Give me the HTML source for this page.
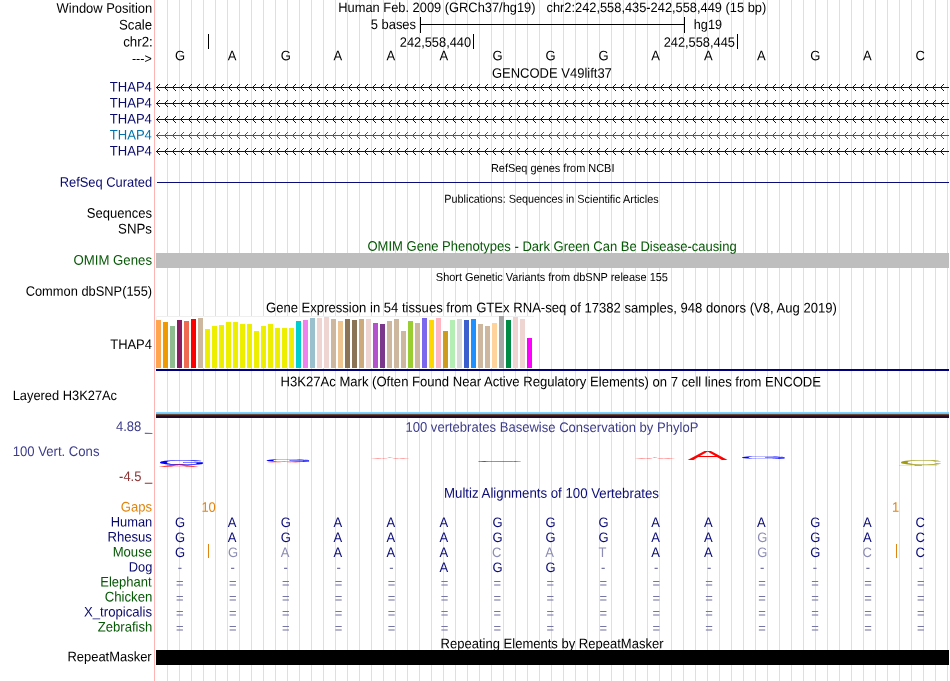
<!DOCTYPE html>
<html><head><meta charset="utf-8"><title>UCSC Genome Browser chr2:242,558,435-242,558,449</title>
<style>
html,body{margin:0;padding:0;background:#fff;}
svg{display:block;will-change:transform;font-family:"Liberation Sans",sans-serif;}
</style></head><body>
<svg width="950" height="681" viewBox="0 0 950 681">
<rect width="950" height="681" fill="#fff"/>
<g shape-rendering="crispEdges">
<rect x="167" y="0" width="1" height="681" fill="#dbdbff"/>
<rect x="179" y="0" width="1" height="681" fill="#dbdbff"/>
<rect x="191" y="0" width="1" height="681" fill="#dbdbff"/>
<rect x="203" y="0" width="1" height="681" fill="#dbdbff"/>
<rect x="215" y="0" width="1" height="681" fill="#dbdbff"/>
<rect x="227" y="0" width="1" height="681" fill="#dbdbff"/>
<rect x="239" y="0" width="1" height="681" fill="#dbdbff"/>
<rect x="251" y="0" width="1" height="681" fill="#dbdbff"/>
<rect x="263" y="0" width="1" height="681" fill="#dbdbff"/>
<rect x="275" y="0" width="1" height="681" fill="#dbdbff"/>
<rect x="287" y="0" width="1" height="681" fill="#dbdbff"/>
<rect x="299" y="0" width="1" height="681" fill="#dbdbff"/>
<rect x="311" y="0" width="1" height="681" fill="#dbdbff"/>
<rect x="323" y="0" width="1" height="681" fill="#dbdbff"/>
<rect x="335" y="0" width="1" height="681" fill="#dbdbff"/>
<rect x="347" y="0" width="1" height="681" fill="#dbdbff"/>
<rect x="359" y="0" width="1" height="681" fill="#dbdbff"/>
<rect x="371" y="0" width="1" height="681" fill="#dbdbff"/>
<rect x="383" y="0" width="1" height="681" fill="#dbdbff"/>
<rect x="395" y="0" width="1" height="681" fill="#dbdbff"/>
<rect x="407" y="0" width="1" height="681" fill="#dbdbff"/>
<rect x="419" y="0" width="1" height="681" fill="#dbdbff"/>
<rect x="431" y="0" width="1" height="681" fill="#dbdbff"/>
<rect x="443" y="0" width="1" height="681" fill="#dbdbff"/>
<rect x="455" y="0" width="1" height="681" fill="#dbdbff"/>
<rect x="467" y="0" width="1" height="681" fill="#dbdbff"/>
<rect x="479" y="0" width="1" height="681" fill="#dbdbff"/>
<rect x="491" y="0" width="1" height="681" fill="#dbdbff"/>
<rect x="503" y="0" width="1" height="681" fill="#dbdbff"/>
<rect x="515" y="0" width="1" height="681" fill="#dbdbff"/>
<rect x="527" y="0" width="1" height="681" fill="#dbdbff"/>
<rect x="539" y="0" width="1" height="681" fill="#dbdbff"/>
<rect x="551" y="0" width="1" height="681" fill="#dbdbff"/>
<rect x="563" y="0" width="1" height="681" fill="#dbdbff"/>
<rect x="575" y="0" width="1" height="681" fill="#dbdbff"/>
<rect x="587" y="0" width="1" height="681" fill="#dbdbff"/>
<rect x="599" y="0" width="1" height="681" fill="#dbdbff"/>
<rect x="611" y="0" width="1" height="681" fill="#dbdbff"/>
<rect x="623" y="0" width="1" height="681" fill="#dbdbff"/>
<rect x="635" y="0" width="1" height="681" fill="#dbdbff"/>
<rect x="647" y="0" width="1" height="681" fill="#dbdbff"/>
<rect x="659" y="0" width="1" height="681" fill="#dbdbff"/>
<rect x="671" y="0" width="1" height="681" fill="#dbdbff"/>
<rect x="683" y="0" width="1" height="681" fill="#dbdbff"/>
<rect x="695" y="0" width="1" height="681" fill="#dbdbff"/>
<rect x="707" y="0" width="1" height="681" fill="#dbdbff"/>
<rect x="719" y="0" width="1" height="681" fill="#dbdbff"/>
<rect x="731" y="0" width="1" height="681" fill="#dbdbff"/>
<rect x="743" y="0" width="1" height="681" fill="#dbdbff"/>
<rect x="755" y="0" width="1" height="681" fill="#dbdbff"/>
<rect x="767" y="0" width="1" height="681" fill="#dbdbff"/>
<rect x="779" y="0" width="1" height="681" fill="#dbdbff"/>
<rect x="791" y="0" width="1" height="681" fill="#dbdbff"/>
<rect x="803" y="0" width="1" height="681" fill="#dbdbff"/>
<rect x="815" y="0" width="1" height="681" fill="#dbdbff"/>
<rect x="827" y="0" width="1" height="681" fill="#dbdbff"/>
<rect x="839" y="0" width="1" height="681" fill="#dbdbff"/>
<rect x="851" y="0" width="1" height="681" fill="#dbdbff"/>
<rect x="863" y="0" width="1" height="681" fill="#dbdbff"/>
<rect x="875" y="0" width="1" height="681" fill="#dbdbff"/>
<rect x="887" y="0" width="1" height="681" fill="#dbdbff"/>
<rect x="899" y="0" width="1" height="681" fill="#dbdbff"/>
<rect x="911" y="0" width="1" height="681" fill="#dbdbff"/>
<rect x="923" y="0" width="1" height="681" fill="#dbdbff"/>
<rect x="935" y="0" width="1" height="681" fill="#dbdbff"/>
<rect x="947" y="0" width="1" height="681" fill="#dbdbff"/>
<rect x="154" y="0" width="1" height="681" fill="#ffb4b4"/>
<rect x="208" y="34" width="1" height="15" fill="#000"/>
<rect x="473" y="34" width="1" height="15" fill="#000"/>
<rect x="737" y="34" width="1" height="15" fill="#000"/>
<rect x="420" y="24" width="265" height="1" fill="#000"/>
<rect x="420" y="17" width="1" height="16" fill="#000"/>
<rect x="684" y="17" width="1" height="16" fill="#000"/>
<rect x="156" y="87" width="793" height="1" fill="#0c0c78"/>
<rect x="156" y="103" width="793" height="1" fill="#0c0c78"/>
<rect x="156" y="119" width="793" height="1" fill="#0c0c78"/>
<rect x="156" y="135" width="793" height="1" fill="#0171ab"/>
<rect x="156" y="151" width="793" height="1" fill="#0c0c78"/>
<rect x="157" y="182" width="792" height="1" fill="#0c0c78"/>
<rect x="156" y="253" width="793" height="15" fill="#bebebe"/>
<rect x="156" y="316" width="378" height="52" fill="#fff"/>
<rect x="156" y="316" width="378" height="1" fill="#efefef"/>
<rect x="156" y="316" width="1" height="52" fill="#f4f4f4"/>
<rect x="156" y="320" width="5" height="48" fill="#FFA54F"/>
<rect x="163" y="322" width="5" height="46" fill="#EE9A00"/>
<rect x="170" y="326" width="5" height="42" fill="#8FBC8F"/>
<rect x="177" y="320" width="5" height="48" fill="#8B1C62"/>
<rect x="184" y="321" width="5" height="47" fill="#EE6A50"/>
<rect x="191" y="319" width="5" height="49" fill="#FF0000"/>
<rect x="198" y="318" width="5" height="50" fill="#CDB79E"/>
<rect x="205" y="329" width="5" height="39" fill="#EEEE00"/>
<rect x="212" y="326" width="5" height="42" fill="#EEEE00"/>
<rect x="219" y="325" width="5" height="43" fill="#EEEE00"/>
<rect x="226" y="322" width="5" height="46" fill="#EEEE00"/>
<rect x="233" y="322" width="5" height="46" fill="#EEEE00"/>
<rect x="240" y="324" width="5" height="44" fill="#EEEE00"/>
<rect x="247" y="324" width="5" height="44" fill="#EEEE00"/>
<rect x="254" y="331" width="5" height="37" fill="#EEEE00"/>
<rect x="261" y="326" width="5" height="42" fill="#EEEE00"/>
<rect x="268" y="324" width="5" height="44" fill="#EEEE00"/>
<rect x="275" y="328" width="5" height="40" fill="#EEEE00"/>
<rect x="282" y="328" width="5" height="40" fill="#EEEE00"/>
<rect x="289" y="328" width="5" height="40" fill="#EEEE00"/>
<rect x="296" y="321" width="5" height="47" fill="#00CDCD"/>
<rect x="303" y="320" width="5" height="48" fill="#EE82EE"/>
<rect x="310" y="318" width="5" height="50" fill="#9AC0CD"/>
<rect x="317" y="318" width="5" height="50" fill="#EED5D2"/>
<rect x="324" y="317" width="5" height="51" fill="#EED5D2"/>
<rect x="331" y="319" width="5" height="49" fill="#CDB79E"/>
<rect x="338" y="321" width="5" height="47" fill="#EEC591"/>
<rect x="345" y="319" width="5" height="49" fill="#8B7355"/>
<rect x="352" y="320" width="5" height="48" fill="#8B7355"/>
<rect x="359" y="319" width="5" height="49" fill="#CDAA7D"/>
<rect x="366" y="319" width="5" height="49" fill="#EED5D2"/>
<rect x="373" y="323" width="5" height="45" fill="#B452CD"/>
<rect x="380" y="324" width="5" height="44" fill="#7A378B"/>
<rect x="387" y="321" width="5" height="47" fill="#CDB79E"/>
<rect x="394" y="319" width="5" height="49" fill="#CDB79E"/>
<rect x="401" y="331" width="5" height="37" fill="#CDB79E"/>
<rect x="408" y="321" width="5" height="47" fill="#9ACD32"/>
<rect x="415" y="323" width="5" height="45" fill="#CDB79E"/>
<rect x="422" y="318" width="5" height="50" fill="#7A67EE"/>
<rect x="429" y="320" width="5" height="48" fill="#FFD700"/>
<rect x="436" y="318" width="5" height="50" fill="#FFB6C1"/>
<rect x="443" y="331" width="5" height="37" fill="#CD9B1D"/>
<rect x="450" y="320" width="5" height="48" fill="#B4EEB4"/>
<rect x="457" y="319" width="5" height="49" fill="#D9D9D9"/>
<rect x="464" y="320" width="5" height="48" fill="#3A5FCD"/>
<rect x="471" y="319" width="5" height="49" fill="#1E90FF"/>
<rect x="478" y="324" width="5" height="44" fill="#CDB79E"/>
<rect x="485" y="326" width="5" height="42" fill="#CDB79E"/>
<rect x="492" y="323" width="5" height="45" fill="#FFD39B"/>
<rect x="499" y="316" width="5" height="52" fill="#A6A6A6"/>
<rect x="506" y="320" width="5" height="48" fill="#008B45"/>
<rect x="513" y="317" width="5" height="51" fill="#EED5D2"/>
<rect x="520" y="319" width="5" height="49" fill="#EED5D2"/>
<rect x="527" y="338" width="5" height="30" fill="#FF00FF"/>
<rect x="156" y="369" width="793" height="2" fill="#00007a"/>
<rect x="156" y="412" width="793" height="1" fill="#80d4ff"/>
<rect x="156" y="413" width="793" height="1" fill="#7ac4ea"/>
<rect x="156" y="414" width="793" height="1" fill="#6b4a3c"/>
<rect x="156" y="415" width="793" height="1" fill="#3c1c2c"/>
<rect x="156" y="416" width="793" height="1" fill="#220a22"/>
<rect x="156" y="417" width="793" height="1" fill="#1c0a2a"/>
<rect x="208" y="544" width="1" height="14" fill="#e0850f"/>
<rect x="896" y="544" width="1" height="14" fill="#e0850f"/>
<rect x="156" y="650" width="793" height="15" fill="#000"/>
</g>
<pattern id="cvn" patternUnits="userSpaceOnUse" x="156" y="84" width="8" height="16"><rect x="1" y="2" width="1" height="1" fill="#0c0c78"/><rect x="1" y="4" width="1" height="1" fill="#0c0c78"/><rect x="2" y="1" width="1" height="1" fill="#0c0c78"/><rect x="2" y="5" width="1" height="1" fill="#0c0c78"/><rect x="3" y="0" width="1" height="1" fill="#0c0c78"/><rect x="3" y="6" width="1" height="1" fill="#0c0c78"/></pattern>
<pattern id="cvt" patternUnits="userSpaceOnUse" x="156" y="84" width="8" height="16"><rect x="1" y="2" width="1" height="1" fill="#0171ab"/><rect x="1" y="4" width="1" height="1" fill="#0171ab"/><rect x="2" y="1" width="1" height="1" fill="#0171ab"/><rect x="2" y="5" width="1" height="1" fill="#0171ab"/><rect x="3" y="0" width="1" height="1" fill="#0171ab"/><rect x="3" y="6" width="1" height="1" fill="#0171ab"/></pattern>
<rect x="156" y="84" width="793" height="7" fill="url(#cvn)" shape-rendering="crispEdges"/>
<rect x="156" y="100" width="793" height="7" fill="url(#cvn)" shape-rendering="crispEdges"/>
<rect x="156" y="116" width="793" height="7" fill="url(#cvn)" shape-rendering="crispEdges"/>
<rect x="156" y="132" width="793" height="7" fill="url(#cvt)" shape-rendering="crispEdges"/>
<rect x="156" y="148" width="793" height="7" fill="url(#cvn)" shape-rendering="crispEdges"/>
<text transform="translate(56.60,12.8) scale(1,1.06) rotate(0.03)" font-size="12.95" fill="#000">Window Position</text>
<text transform="translate(118.97,29.6) scale(1,1.06) rotate(0.03)" font-size="13.24" fill="#000">Scale</text>
<text transform="translate(123.17,46.6) scale(1,1.06) rotate(0.03)" font-size="13.32" fill="#000">chr2:</text>
<text transform="translate(131.90,62.9) scale(1,1.06) rotate(0.03)" font-size="12.54" fill="#000">---&gt;</text>
<text transform="translate(109.84,91.5) scale(1,1.06) rotate(0.03)" font-size="13.06" fill="#0a0a6e">THAP4</text>
<text transform="translate(109.84,107.5) scale(1,1.06) rotate(0.03)" font-size="13.06" fill="#0a0a6e">THAP4</text>
<text transform="translate(109.84,123.5) scale(1,1.06) rotate(0.03)" font-size="13.06" fill="#0a0a6e">THAP4</text>
<text transform="translate(109.84,139.5) scale(1,1.06) rotate(0.03)" font-size="13.06" fill="#0171ab">THAP4</text>
<text transform="translate(109.84,155.5) scale(1,1.06) rotate(0.03)" font-size="13.06" fill="#0a0a6e">THAP4</text>
<text transform="translate(59.67,186.7) scale(1,1.06) rotate(0.03)" font-size="12.92" fill="#0a0a6e">RefSeq Curated</text>
<text transform="translate(86.78,217.8) scale(1,1.06) rotate(0.03)" font-size="13.03" fill="#000">Sequences</text>
<text transform="translate(118.07,233.6) scale(1,1.06) rotate(0.03)" font-size="13.27" fill="#000">SNPs</text>
<text transform="translate(73.47,264.7) scale(1,1.06) rotate(0.03)" font-size="13.21" fill="#065806">OMIM Genes</text>
<text transform="translate(25.66,295.8) scale(1,1.06) rotate(0.03)" font-size="12.87" fill="#000">Common dbSNP(155)</text>
<text transform="translate(110.24,349) scale(1,1.06) rotate(0.03)" font-size="12.94" fill="#000">THAP4</text>
<text transform="translate(12.67,400) scale(1,1.06) rotate(0.03)" font-size="12.86" fill="#000">Layered H3K27Ac</text>
<text transform="translate(115.94,430.9) scale(1,1.06) rotate(0.03)" font-size="13.05" fill="#3c3c8c">4.88 _</text>
<text transform="translate(12.68,456.0) scale(1,1.06) rotate(0.03)" font-size="13.14" fill="#3c3c8c">100 Vert. Cons</text>
<text transform="translate(119.08,481.1) scale(1,1.06) rotate(0.03)" font-size="12.96" fill="#8c3232">-4.5 _</text>
<text transform="translate(120.75,511.5) scale(1,1.06) rotate(0.03)" font-size="13.07" fill="#e0850f">Gaps</text>
<text transform="translate(110.67,526.5) scale(1,1.06) rotate(0.03)" font-size="12.92" fill="#0a0a6e">Human</text>
<text transform="translate(107.45,541.5) scale(1,1.06) rotate(0.03)" font-size="13.14" fill="#0a0a6e">Rhesus</text>
<text transform="translate(112.65,556.5) scale(1,1.06) rotate(0.03)" font-size="13.14" fill="#065806">Mouse</text>
<text transform="translate(128.77,571.5) scale(1,1.06) rotate(0.03)" font-size="12.84" fill="#0a0a6e">Dog</text>
<text transform="translate(100.26,586.5) scale(1,1.06) rotate(0.03)" font-size="13.00" fill="#065806">Elephant</text>
<text transform="translate(104.64,601.5) scale(1,1.06) rotate(0.03)" font-size="13.20" fill="#065806">Chicken</text>
<text transform="translate(84.04,616.5) scale(1,1.06) rotate(0.03)" font-size="13.15" fill="#0a0a6e">X_tropicalis</text>
<text transform="translate(97.71,631.5) scale(1,1.06) rotate(0.03)" font-size="13.11" fill="#065806">Zebrafish</text>
<text transform="translate(67.46,661.3) scale(1,1.06) rotate(0.03)" font-size="12.96" fill="#000">RepeatMasker</text>
<text transform="translate(338.27,12) scale(1,1.06) rotate(0.03)" font-size="12.87" fill="#000">Human Feb. 2009 (GRCh37/hg19)</text>
<text transform="translate(546.49,12) scale(1,1.06) rotate(0.03)" font-size="12.84" fill="#000">chr2:242,558,435-242,558,449 (15 bp)</text>
<text transform="translate(370.68,29) scale(1,1.06) rotate(0.03)" font-size="12.96" fill="#000">5 bases</text>
<text transform="translate(693.84,29) scale(1,1.06) rotate(0.03)" font-size="12.65" fill="#000">hg19</text>
<text transform="translate(399.76,46.8) scale(1,1.06) rotate(0.03)" font-size="12.84" fill="#000">242,558,440</text>
<text transform="translate(663.66,46.8) scale(1,1.06) rotate(0.03)" font-size="12.82" fill="#000">242,558,445</text>
<text transform="translate(491.95,77.7) scale(1,1.06) rotate(0.03)" font-size="13.01" fill="#000">GENCODE V49lift37</text>
<text transform="translate(490.92,172) scale(1,1.06) rotate(0.03)" font-size="10.96" fill="#000">RefSeq genes from NCBI</text>
<text transform="translate(444.33,202.8) scale(1,1.06) rotate(0.03)" font-size="10.84" fill="#000">Publications: Sequences in Scientific Articles</text>
<text transform="translate(367.48,250.8) scale(1,1.06) rotate(0.03)" font-size="13.04" fill="#065806">OMIM Gene Phenotypes - Dark Green Can Be Disease-causing</text>
<text transform="translate(435.86,281) scale(1,1.06) rotate(0.03)" font-size="10.96" fill="#000">Short Genetic Variants from dbSNP release 155</text>
<text transform="translate(265.95,312.2) scale(1,1.06) rotate(0.03)" font-size="13.10" fill="#000">Gene Expression in 54 tissues from GTEx RNA-seq of 17382 samples, 948 donors (V8, Aug 2019)</text>
<text transform="translate(280.55,386.2) scale(1,1.06) rotate(0.03)" font-size="13.09" fill="#000">H3K27Ac Mark (Often Found Near Active Regulatory Elements) on 7 cell lines from ENCODE</text>
<text transform="translate(405.49,431.8) scale(1,1.06) rotate(0.03)" font-size="13.05" fill="#3c3c8c">100 vertebrates Basewise Conservation by PhyloP</text>
<text transform="translate(444.04,497.8) scale(1,1.06) rotate(0.03)" font-size="13.25" fill="#0c0c78">Multiz Alignments of 100 Vertebrates</text>
<text transform="translate(440.56,648.2) scale(1,1.06) rotate(0.03)" font-size="13.04" fill="#000">Repeating Elements by RepeatMasker</text>
<text transform="translate(180.0,60.3) scale(1,1.06) rotate(0.03)" font-size="13" fill="#000" text-anchor="middle">G</text>
<text transform="translate(232.03,60.3) scale(1,1.06) rotate(0.03)" font-size="13" fill="#000" text-anchor="middle">A</text>
<text transform="translate(285.87,60.3) scale(1,1.06) rotate(0.03)" font-size="13" fill="#000" text-anchor="middle">G</text>
<text transform="translate(337.9,60.3) scale(1,1.06) rotate(0.03)" font-size="13" fill="#000" text-anchor="middle">A</text>
<text transform="translate(390.83,60.3) scale(1,1.06) rotate(0.03)" font-size="13" fill="#000" text-anchor="middle">A</text>
<text transform="translate(443.77,60.3) scale(1,1.06) rotate(0.03)" font-size="13" fill="#000" text-anchor="middle">A</text>
<text transform="translate(497.59999999999997,60.3) scale(1,1.06) rotate(0.03)" font-size="13" fill="#000" text-anchor="middle">G</text>
<text transform="translate(550.53,60.3) scale(1,1.06) rotate(0.03)" font-size="13" fill="#000" text-anchor="middle">G</text>
<text transform="translate(603.47,60.3) scale(1,1.06) rotate(0.03)" font-size="13" fill="#000" text-anchor="middle">G</text>
<text transform="translate(655.5,60.3) scale(1,1.06) rotate(0.03)" font-size="13" fill="#000" text-anchor="middle">A</text>
<text transform="translate(708.43,60.3) scale(1,1.06) rotate(0.03)" font-size="13" fill="#000" text-anchor="middle">A</text>
<text transform="translate(761.37,60.3) scale(1,1.06) rotate(0.03)" font-size="13" fill="#000" text-anchor="middle">A</text>
<text transform="translate(815.1999999999999,60.3) scale(1,1.06) rotate(0.03)" font-size="13" fill="#000" text-anchor="middle">G</text>
<text transform="translate(867.23,60.3) scale(1,1.06) rotate(0.03)" font-size="13" fill="#000" text-anchor="middle">A</text>
<text transform="translate(920.17,60.3) scale(1,1.06) rotate(0.03)" font-size="13" fill="#000" text-anchor="middle">C</text>
<text transform="translate(180.0,527) scale(1,1.06) rotate(0.03)" font-size="13" fill="#0c0c78" text-anchor="middle">G</text>
<text transform="translate(232.03,527) scale(1,1.06) rotate(0.03)" font-size="13" fill="#0c0c78" text-anchor="middle">A</text>
<text transform="translate(285.87,527) scale(1,1.06) rotate(0.03)" font-size="13" fill="#0c0c78" text-anchor="middle">G</text>
<text transform="translate(337.9,527) scale(1,1.06) rotate(0.03)" font-size="13" fill="#0c0c78" text-anchor="middle">A</text>
<text transform="translate(390.83,527) scale(1,1.06) rotate(0.03)" font-size="13" fill="#0c0c78" text-anchor="middle">A</text>
<text transform="translate(443.77,527) scale(1,1.06) rotate(0.03)" font-size="13" fill="#0c0c78" text-anchor="middle">A</text>
<text transform="translate(497.59999999999997,527) scale(1,1.06) rotate(0.03)" font-size="13" fill="#0c0c78" text-anchor="middle">G</text>
<text transform="translate(550.53,527) scale(1,1.06) rotate(0.03)" font-size="13" fill="#0c0c78" text-anchor="middle">G</text>
<text transform="translate(603.47,527) scale(1,1.06) rotate(0.03)" font-size="13" fill="#0c0c78" text-anchor="middle">G</text>
<text transform="translate(655.5,527) scale(1,1.06) rotate(0.03)" font-size="13" fill="#0c0c78" text-anchor="middle">A</text>
<text transform="translate(708.43,527) scale(1,1.06) rotate(0.03)" font-size="13" fill="#0c0c78" text-anchor="middle">A</text>
<text transform="translate(761.37,527) scale(1,1.06) rotate(0.03)" font-size="13" fill="#0c0c78" text-anchor="middle">A</text>
<text transform="translate(815.1999999999999,527) scale(1,1.06) rotate(0.03)" font-size="13" fill="#0c0c78" text-anchor="middle">G</text>
<text transform="translate(867.23,527) scale(1,1.06) rotate(0.03)" font-size="13" fill="#0c0c78" text-anchor="middle">A</text>
<text transform="translate(920.17,527) scale(1,1.06) rotate(0.03)" font-size="13" fill="#0c0c78" text-anchor="middle">C</text>
<text transform="translate(180.0,542) scale(1,1.06) rotate(0.03)" font-size="13" fill="#0c0c78" text-anchor="middle">G</text>
<text transform="translate(232.03,542) scale(1,1.06) rotate(0.03)" font-size="13" fill="#0c0c78" text-anchor="middle">A</text>
<text transform="translate(285.87,542) scale(1,1.06) rotate(0.03)" font-size="13" fill="#0c0c78" text-anchor="middle">G</text>
<text transform="translate(337.9,542) scale(1,1.06) rotate(0.03)" font-size="13" fill="#0c0c78" text-anchor="middle">A</text>
<text transform="translate(390.83,542) scale(1,1.06) rotate(0.03)" font-size="13" fill="#0c0c78" text-anchor="middle">A</text>
<text transform="translate(443.77,542) scale(1,1.06) rotate(0.03)" font-size="13" fill="#0c0c78" text-anchor="middle">A</text>
<text transform="translate(497.59999999999997,542) scale(1,1.06) rotate(0.03)" font-size="13" fill="#0c0c78" text-anchor="middle">G</text>
<text transform="translate(550.53,542) scale(1,1.06) rotate(0.03)" font-size="13" fill="#0c0c78" text-anchor="middle">G</text>
<text transform="translate(603.47,542) scale(1,1.06) rotate(0.03)" font-size="13" fill="#0c0c78" text-anchor="middle">G</text>
<text transform="translate(655.5,542) scale(1,1.06) rotate(0.03)" font-size="13" fill="#0c0c78" text-anchor="middle">A</text>
<text transform="translate(708.43,542) scale(1,1.06) rotate(0.03)" font-size="13" fill="#0c0c78" text-anchor="middle">A</text>
<text transform="translate(762.27,542) scale(1,1.06) rotate(0.03)" font-size="13" fill="#8c8cb4" text-anchor="middle">G</text>
<text transform="translate(815.1999999999999,542) scale(1,1.06) rotate(0.03)" font-size="13" fill="#0c0c78" text-anchor="middle">G</text>
<text transform="translate(867.23,542) scale(1,1.06) rotate(0.03)" font-size="13" fill="#0c0c78" text-anchor="middle">A</text>
<text transform="translate(920.17,542) scale(1,1.06) rotate(0.03)" font-size="13" fill="#0c0c78" text-anchor="middle">C</text>
<text transform="translate(180.0,557) scale(1,1.06) rotate(0.03)" font-size="13" fill="#0c0c78" text-anchor="middle">G</text>
<text transform="translate(232.93,557) scale(1,1.06) rotate(0.03)" font-size="13" fill="#8c8cb4" text-anchor="middle">G</text>
<text transform="translate(284.97,557) scale(1,1.06) rotate(0.03)" font-size="13" fill="#8c8cb4" text-anchor="middle">A</text>
<text transform="translate(337.9,557) scale(1,1.06) rotate(0.03)" font-size="13" fill="#0c0c78" text-anchor="middle">A</text>
<text transform="translate(390.83,557) scale(1,1.06) rotate(0.03)" font-size="13" fill="#0c0c78" text-anchor="middle">A</text>
<text transform="translate(443.77,557) scale(1,1.06) rotate(0.03)" font-size="13" fill="#0c0c78" text-anchor="middle">A</text>
<text transform="translate(496.7,557) scale(1,1.06) rotate(0.03)" font-size="13" fill="#8c8cb4" text-anchor="middle">C</text>
<text transform="translate(549.63,557) scale(1,1.06) rotate(0.03)" font-size="13" fill="#8c8cb4" text-anchor="middle">A</text>
<text transform="translate(602.57,557) scale(1,1.06) rotate(0.03)" font-size="13" fill="#8c8cb4" text-anchor="middle">T</text>
<text transform="translate(655.5,557) scale(1,1.06) rotate(0.03)" font-size="13" fill="#0c0c78" text-anchor="middle">A</text>
<text transform="translate(708.43,557) scale(1,1.06) rotate(0.03)" font-size="13" fill="#0c0c78" text-anchor="middle">A</text>
<text transform="translate(762.27,557) scale(1,1.06) rotate(0.03)" font-size="13" fill="#8c8cb4" text-anchor="middle">G</text>
<text transform="translate(815.1999999999999,557) scale(1,1.06) rotate(0.03)" font-size="13" fill="#0c0c78" text-anchor="middle">G</text>
<text transform="translate(867.23,557) scale(1,1.06) rotate(0.03)" font-size="13" fill="#8c8cb4" text-anchor="middle">C</text>
<text transform="translate(920.17,557) scale(1,1.06) rotate(0.03)" font-size="13" fill="#0c0c78" text-anchor="middle">C</text>
<text transform="translate(179.79999999999998,572) scale(1,1.06) rotate(0.03)" font-size="13" fill="#7676a6" text-anchor="middle">-</text>
<text transform="translate(232.73,572) scale(1,1.06) rotate(0.03)" font-size="13" fill="#7676a6" text-anchor="middle">-</text>
<text transform="translate(285.67,572) scale(1,1.06) rotate(0.03)" font-size="13" fill="#7676a6" text-anchor="middle">-</text>
<text transform="translate(338.59999999999997,572) scale(1,1.06) rotate(0.03)" font-size="13" fill="#7676a6" text-anchor="middle">-</text>
<text transform="translate(391.53,572) scale(1,1.06) rotate(0.03)" font-size="13" fill="#7676a6" text-anchor="middle">-</text>
<text transform="translate(443.77,572) scale(1,1.06) rotate(0.03)" font-size="13" fill="#0c0c78" text-anchor="middle">A</text>
<text transform="translate(497.59999999999997,572) scale(1,1.06) rotate(0.03)" font-size="13" fill="#0c0c78" text-anchor="middle">G</text>
<text transform="translate(550.53,572) scale(1,1.06) rotate(0.03)" font-size="13" fill="#0c0c78" text-anchor="middle">G</text>
<text transform="translate(603.2700000000001,572) scale(1,1.06) rotate(0.03)" font-size="13" fill="#7676a6" text-anchor="middle">-</text>
<text transform="translate(656.2,572) scale(1,1.06) rotate(0.03)" font-size="13" fill="#7676a6" text-anchor="middle">-</text>
<text transform="translate(709.13,572) scale(1,1.06) rotate(0.03)" font-size="13" fill="#7676a6" text-anchor="middle">-</text>
<text transform="translate(762.07,572) scale(1,1.06) rotate(0.03)" font-size="13" fill="#7676a6" text-anchor="middle">-</text>
<text transform="translate(815.0,572) scale(1,1.06) rotate(0.03)" font-size="13" fill="#7676a6" text-anchor="middle">-</text>
<text transform="translate(867.9300000000001,572) scale(1,1.06) rotate(0.03)" font-size="13" fill="#7676a6" text-anchor="middle">-</text>
<text transform="translate(920.87,572) scale(1,1.06) rotate(0.03)" font-size="13" fill="#7676a6" text-anchor="middle">-</text>
<text transform="translate(179.79999999999998,587.8) scale(1,1.06) rotate(0.03)" font-size="13" fill="#7676a6" text-anchor="middle">=</text>
<text transform="translate(232.73,587.8) scale(1,1.06) rotate(0.03)" font-size="13" fill="#7676a6" text-anchor="middle">=</text>
<text transform="translate(285.67,587.8) scale(1,1.06) rotate(0.03)" font-size="13" fill="#7676a6" text-anchor="middle">=</text>
<text transform="translate(338.59999999999997,587.8) scale(1,1.06) rotate(0.03)" font-size="13" fill="#7676a6" text-anchor="middle">=</text>
<text transform="translate(391.53,587.8) scale(1,1.06) rotate(0.03)" font-size="13" fill="#7676a6" text-anchor="middle">=</text>
<text transform="translate(444.46999999999997,587.8) scale(1,1.06) rotate(0.03)" font-size="13" fill="#7676a6" text-anchor="middle">=</text>
<text transform="translate(497.4,587.8) scale(1,1.06) rotate(0.03)" font-size="13" fill="#7676a6" text-anchor="middle">=</text>
<text transform="translate(550.33,587.8) scale(1,1.06) rotate(0.03)" font-size="13" fill="#7676a6" text-anchor="middle">=</text>
<text transform="translate(603.2700000000001,587.8) scale(1,1.06) rotate(0.03)" font-size="13" fill="#7676a6" text-anchor="middle">=</text>
<text transform="translate(656.2,587.8) scale(1,1.06) rotate(0.03)" font-size="13" fill="#7676a6" text-anchor="middle">=</text>
<text transform="translate(709.13,587.8) scale(1,1.06) rotate(0.03)" font-size="13" fill="#7676a6" text-anchor="middle">=</text>
<text transform="translate(762.07,587.8) scale(1,1.06) rotate(0.03)" font-size="13" fill="#7676a6" text-anchor="middle">=</text>
<text transform="translate(815.0,587.8) scale(1,1.06) rotate(0.03)" font-size="13" fill="#7676a6" text-anchor="middle">=</text>
<text transform="translate(867.9300000000001,587.8) scale(1,1.06) rotate(0.03)" font-size="13" fill="#7676a6" text-anchor="middle">=</text>
<text transform="translate(920.87,587.8) scale(1,1.06) rotate(0.03)" font-size="13" fill="#7676a6" text-anchor="middle">=</text>
<text transform="translate(179.79999999999998,602.8) scale(1,1.06) rotate(0.03)" font-size="13" fill="#7676a6" text-anchor="middle">=</text>
<text transform="translate(232.73,602.8) scale(1,1.06) rotate(0.03)" font-size="13" fill="#7676a6" text-anchor="middle">=</text>
<text transform="translate(285.67,602.8) scale(1,1.06) rotate(0.03)" font-size="13" fill="#7676a6" text-anchor="middle">=</text>
<text transform="translate(338.59999999999997,602.8) scale(1,1.06) rotate(0.03)" font-size="13" fill="#7676a6" text-anchor="middle">=</text>
<text transform="translate(391.53,602.8) scale(1,1.06) rotate(0.03)" font-size="13" fill="#7676a6" text-anchor="middle">=</text>
<text transform="translate(444.46999999999997,602.8) scale(1,1.06) rotate(0.03)" font-size="13" fill="#7676a6" text-anchor="middle">=</text>
<text transform="translate(497.4,602.8) scale(1,1.06) rotate(0.03)" font-size="13" fill="#7676a6" text-anchor="middle">=</text>
<text transform="translate(550.33,602.8) scale(1,1.06) rotate(0.03)" font-size="13" fill="#7676a6" text-anchor="middle">=</text>
<text transform="translate(603.2700000000001,602.8) scale(1,1.06) rotate(0.03)" font-size="13" fill="#7676a6" text-anchor="middle">=</text>
<text transform="translate(656.2,602.8) scale(1,1.06) rotate(0.03)" font-size="13" fill="#7676a6" text-anchor="middle">=</text>
<text transform="translate(709.13,602.8) scale(1,1.06) rotate(0.03)" font-size="13" fill="#7676a6" text-anchor="middle">=</text>
<text transform="translate(762.07,602.8) scale(1,1.06) rotate(0.03)" font-size="13" fill="#7676a6" text-anchor="middle">=</text>
<text transform="translate(815.0,602.8) scale(1,1.06) rotate(0.03)" font-size="13" fill="#7676a6" text-anchor="middle">=</text>
<text transform="translate(867.9300000000001,602.8) scale(1,1.06) rotate(0.03)" font-size="13" fill="#7676a6" text-anchor="middle">=</text>
<text transform="translate(920.87,602.8) scale(1,1.06) rotate(0.03)" font-size="13" fill="#7676a6" text-anchor="middle">=</text>
<text transform="translate(179.79999999999998,617.8) scale(1,1.06) rotate(0.03)" font-size="13" fill="#7676a6" text-anchor="middle">=</text>
<text transform="translate(232.73,617.8) scale(1,1.06) rotate(0.03)" font-size="13" fill="#7676a6" text-anchor="middle">=</text>
<text transform="translate(285.67,617.8) scale(1,1.06) rotate(0.03)" font-size="13" fill="#7676a6" text-anchor="middle">=</text>
<text transform="translate(338.59999999999997,617.8) scale(1,1.06) rotate(0.03)" font-size="13" fill="#7676a6" text-anchor="middle">=</text>
<text transform="translate(391.53,617.8) scale(1,1.06) rotate(0.03)" font-size="13" fill="#7676a6" text-anchor="middle">=</text>
<text transform="translate(444.46999999999997,617.8) scale(1,1.06) rotate(0.03)" font-size="13" fill="#7676a6" text-anchor="middle">=</text>
<text transform="translate(497.4,617.8) scale(1,1.06) rotate(0.03)" font-size="13" fill="#7676a6" text-anchor="middle">=</text>
<text transform="translate(550.33,617.8) scale(1,1.06) rotate(0.03)" font-size="13" fill="#7676a6" text-anchor="middle">=</text>
<text transform="translate(603.2700000000001,617.8) scale(1,1.06) rotate(0.03)" font-size="13" fill="#7676a6" text-anchor="middle">=</text>
<text transform="translate(656.2,617.8) scale(1,1.06) rotate(0.03)" font-size="13" fill="#7676a6" text-anchor="middle">=</text>
<text transform="translate(709.13,617.8) scale(1,1.06) rotate(0.03)" font-size="13" fill="#7676a6" text-anchor="middle">=</text>
<text transform="translate(762.07,617.8) scale(1,1.06) rotate(0.03)" font-size="13" fill="#7676a6" text-anchor="middle">=</text>
<text transform="translate(815.0,617.8) scale(1,1.06) rotate(0.03)" font-size="13" fill="#7676a6" text-anchor="middle">=</text>
<text transform="translate(867.9300000000001,617.8) scale(1,1.06) rotate(0.03)" font-size="13" fill="#7676a6" text-anchor="middle">=</text>
<text transform="translate(920.87,617.8) scale(1,1.06) rotate(0.03)" font-size="13" fill="#7676a6" text-anchor="middle">=</text>
<text transform="translate(179.79999999999998,632.8) scale(1,1.06) rotate(0.03)" font-size="13" fill="#7676a6" text-anchor="middle">=</text>
<text transform="translate(232.73,632.8) scale(1,1.06) rotate(0.03)" font-size="13" fill="#7676a6" text-anchor="middle">=</text>
<text transform="translate(285.67,632.8) scale(1,1.06) rotate(0.03)" font-size="13" fill="#7676a6" text-anchor="middle">=</text>
<text transform="translate(338.59999999999997,632.8) scale(1,1.06) rotate(0.03)" font-size="13" fill="#7676a6" text-anchor="middle">=</text>
<text transform="translate(391.53,632.8) scale(1,1.06) rotate(0.03)" font-size="13" fill="#7676a6" text-anchor="middle">=</text>
<text transform="translate(444.46999999999997,632.8) scale(1,1.06) rotate(0.03)" font-size="13" fill="#7676a6" text-anchor="middle">=</text>
<text transform="translate(497.4,632.8) scale(1,1.06) rotate(0.03)" font-size="13" fill="#7676a6" text-anchor="middle">=</text>
<text transform="translate(550.33,632.8) scale(1,1.06) rotate(0.03)" font-size="13" fill="#7676a6" text-anchor="middle">=</text>
<text transform="translate(603.2700000000001,632.8) scale(1,1.06) rotate(0.03)" font-size="13" fill="#7676a6" text-anchor="middle">=</text>
<text transform="translate(656.2,632.8) scale(1,1.06) rotate(0.03)" font-size="13" fill="#7676a6" text-anchor="middle">=</text>
<text transform="translate(709.13,632.8) scale(1,1.06) rotate(0.03)" font-size="13" fill="#7676a6" text-anchor="middle">=</text>
<text transform="translate(762.07,632.8) scale(1,1.06) rotate(0.03)" font-size="13" fill="#7676a6" text-anchor="middle">=</text>
<text transform="translate(815.0,632.8) scale(1,1.06) rotate(0.03)" font-size="13" fill="#7676a6" text-anchor="middle">=</text>
<text transform="translate(867.9300000000001,632.8) scale(1,1.06) rotate(0.03)" font-size="13" fill="#7676a6" text-anchor="middle">=</text>
<text transform="translate(920.87,632.8) scale(1,1.06) rotate(0.03)" font-size="13" fill="#7676a6" text-anchor="middle">=</text>
<text transform="translate(208.6,511.8) scale(1,1.06) rotate(0.03)" font-size="13" fill="#e0850f" text-anchor="middle">10</text>
<text transform="translate(895.5,511.8) scale(1,1.06) rotate(0.03)" font-size="13" fill="#e0850f" text-anchor="middle">1</text>
<text transform="translate(158.50,467.20) scale(0.6119,0.0275)" x="0" y="0" font-size="100" fill="#ff0000" fill-opacity="0.75">A</text>
<text transform="translate(156.97,464.83) scale(0.6455,0.0676)" x="0" y="0" font-size="100" fill="#0000ff" stroke="#0000ff" stroke-width="0.6" vector-effect="non-scaling-stroke" stroke-opacity="1">G</text>
<text transform="translate(266.40,463.00) scale(0.5209,0.0145)" x="0" y="0" font-size="100" fill="#ff0000" fill-opacity="0.7" stroke="#ff0000" stroke-width="0.3" vector-effect="non-scaling-stroke" stroke-opacity="0.7">A</text>
<text transform="translate(263.39,461.87) scale(0.6424,0.0268)" x="0" y="0" font-size="100" fill="#0000ff" stroke="#0000ff" stroke-width="0.5" vector-effect="non-scaling-stroke" stroke-opacity="1">G</text>
<text transform="translate(371.10,458.50) scale(0.5791,0.0087)" x="0" y="0" font-size="100" fill="#ff0000" fill-opacity="0.7" stroke="#ff0000" stroke-width="1.0" vector-effect="non-scaling-stroke" stroke-opacity="0.7">A</text>
<text transform="translate(475.40,461.58) scale(0.6394,0.0197)" x="0" y="0" font-size="100" fill="#0000ff" stroke="#0000ff" stroke-width="0.7" vector-effect="non-scaling-stroke" stroke-opacity="1">G</text>
<text transform="translate(635.00,458.70) scale(0.5970,0.0203)" x="0" y="0" font-size="100" fill="#ff0000" fill-opacity="0.85" stroke="#ff0000" stroke-width="0.8" vector-effect="non-scaling-stroke" stroke-opacity="0.85">A</text>
<text transform="translate(687.60,459.90) scale(0.6030,0.1203)" x="0" y="0" font-size="100" fill="#ff0000">A</text>
<text transform="translate(738.88,458.67) scale(0.6439,0.0338)" x="0" y="0" font-size="100" fill="#0000ff" stroke="#0000ff" stroke-width="0.4" vector-effect="non-scaling-stroke" stroke-opacity="1">G</text>
<text transform="translate(898.18,466.08) scale(0.6579,0.0171)" x="0" y="0" font-size="100" fill="#00e000" fill-opacity="0.7" stroke="#00e000" stroke-width="0.5" vector-effect="non-scaling-stroke" stroke-opacity="0.7">T</text>
<text transform="translate(898.04,464.93) scale(0.6312,0.0732)" x="0" y="0" font-size="100" fill="#a09a10" stroke="#a09a10" stroke-width="0.5" vector-effect="non-scaling-stroke" stroke-opacity="1">C</text>
</svg>
</body></html>
